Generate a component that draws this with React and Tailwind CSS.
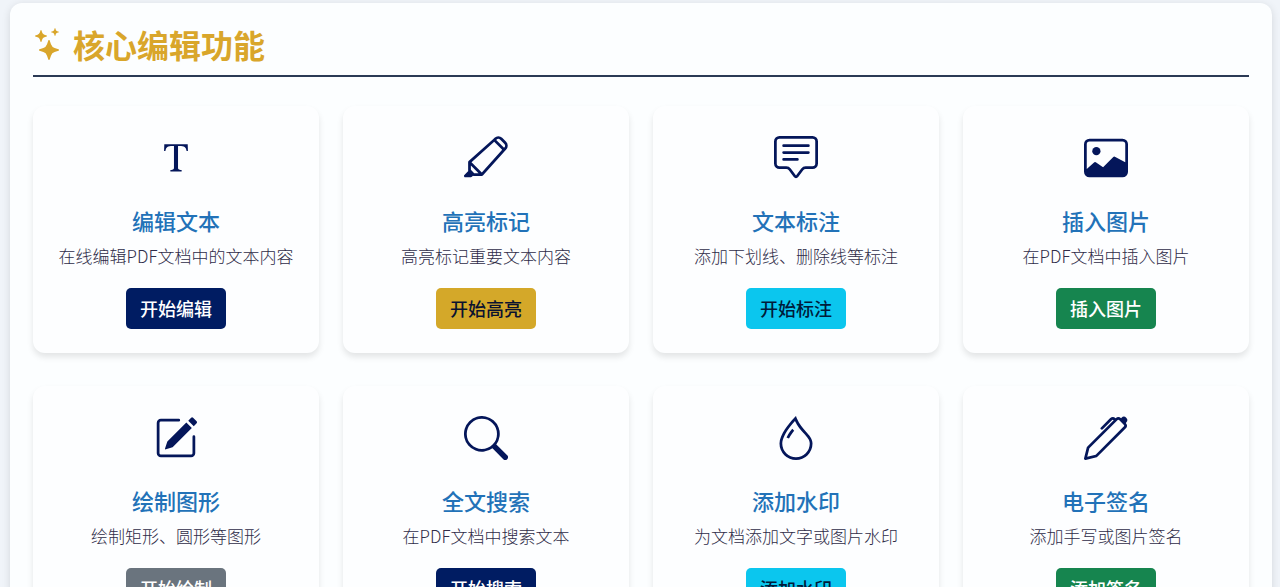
import {
  BsStars,
  BsFonts,
  BsHighlighter,
  BsChatSquareText,
  BsImage,
  BsPencilSquare,
  BsSearch,
  BsDroplet,
  BsPen,
} from "react-icons/bs";

const buttonColors = {
  navy: "bg-[#001c62] text-white",
  gold: "bg-[#d4a829] text-[#0a1230]",
  cyan: "bg-[#0bc6ee] text-[#001b3a]",
  green: "bg-[#16854f] text-white",
  gray: "bg-[#6a747e] text-white",
};

const features = [
  { icon: BsFonts, title: "编辑文本", desc: "在线编辑PDF文档中的文本内容", action: "开始编辑", color: "navy" },
  { icon: BsHighlighter, title: "高亮标记", desc: "高亮标记重要文本内容", action: "开始高亮", color: "gold" },
  { icon: BsChatSquareText, title: "文本标注", desc: "添加下划线、删除线等标注", action: "开始标注", color: "cyan" },
  { icon: BsImage, title: "插入图片", desc: "在PDF文档中插入图片", action: "插入图片", color: "green" },
  { icon: BsPencilSquare, title: "绘制图形", desc: "绘制矩形、圆形等图形", action: "开始绘制", color: "gray" },
  { icon: BsSearch, title: "全文搜索", desc: "在PDF文档中搜索文本", action: "开始搜索", color: "navy" },
  { icon: BsDroplet, title: "添加水印", desc: "为文档添加文字或图片水印", action: "添加水印", color: "cyan" },
  { icon: BsPen, title: "电子签名", desc: "添加手写或图片签名", action: "添加签名", color: "green" },
];

function FeatureCard({ feature }) {
  const Icon = feature.icon;

  return (
    <div className="flex flex-col items-center rounded-xl bg-[#fdfeff] px-4 pt-[30px] pb-6 text-center shadow-[0_4px_6px_rgba(0,0,0,0.1)]">
      <Icon className="size-11 text-[#04165a]" />
      <h3 className="mt-[26px] text-[22px] leading-7 font-medium text-[#2272b8]">
        {feature.title}
      </h3>
      <p className="mt-[10px] text-[17px] leading-6 font-light text-[#2f2c48]">{feature.desc}</p>
      <button
        type="button"
        className={`mt-5 rounded-[5px] px-[14px] py-[7px] text-lg leading-[27px] font-medium ${buttonColors[feature.color]}`}
      >
        {feature.action}
      </button>
    </div>
  );
}

export default function App() {
  return (
    <div className="h-screen overflow-hidden bg-[#f0f4f9] pt-[3px] pr-2 pl-[10px] font-['Noto_Sans_CJK_SC',sans-serif]">
      <section className="rounded-xl bg-[#fcfeff] px-[23px] pt-[19px] pb-6 shadow-[0_2px_8px_rgba(0,0,0,0.12)]">
        {/* Section heading */}
        <h2 className="flex items-center gap-2 border-b-2 border-[#2b3a55] pb-[9px] text-[32px] leading-[44px] font-bold text-[#d9a62b]">
          <BsStars className="size-8" />
          核心编辑功能
        </h2>

        {/* Feature cards */}
        <div className="mt-[29px] grid grid-cols-2 gap-x-6 gap-y-[33px] md:grid-cols-4">
          {features.map((feature) => (
            <FeatureCard key={feature.title} feature={feature} />
          ))}
        </div>
      </section>
    </div>
  );
}
